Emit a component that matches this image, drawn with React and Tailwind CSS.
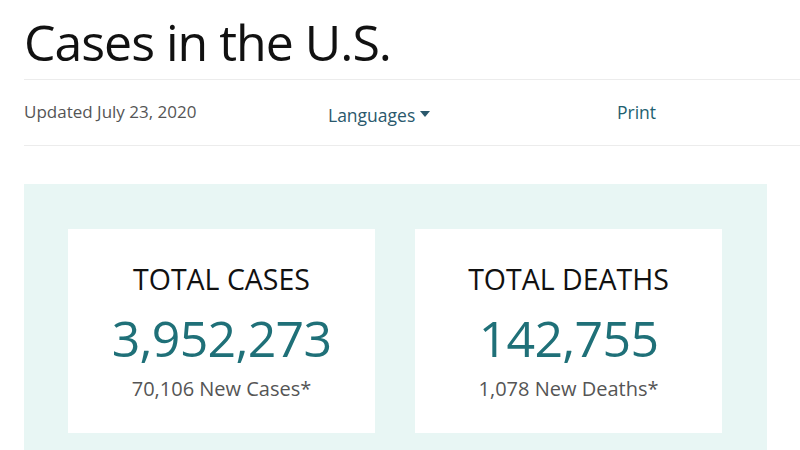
export default function App() {
  const font = { fontFamily: '"Open Sans", "Noto Sans", sans-serif' };
  return (
    <div className="w-[800px] h-[450px] overflow-hidden bg-white" style={font}>
      <div className="ml-6 h-[80px] border-b border-[#ececec]">
        <h1 className="pt-[8px] text-[50px] leading-[68px] text-[#111] tracking-[-1px]">Cases in the U.S.</h1>
      </div>
      <div className="ml-6 h-[66px] border-b border-[#ececec] flex items-start pt-[20px]">
        <div className="w-[304px] text-[17px] leading-[24px] text-[#555]">Updated July 23, 2020</div>
        <div className="w-[289px] flex items-center text-[17.5px] leading-[24px] text-[#2a586c] pt-[3px]">
          Languages
          <svg width="10" height="6" viewBox="0 0 10 6" className="ml-[5px] mt-[-2px]"><path d="M0 0h10L5 6z" fill="#2a586c" /></svg>
        </div>
        <div className="text-[17.5px] leading-[24px] text-[#22606f]">Print</div>
      </div>
      <div className="ml-6 mt-[38px] w-[743px] bg-[#e8f6f4] pt-[45px] px-[44px] pb-[45px] flex gap-[40px]">
        {[
          ['TOTAL CASES', '3,952,273', '70,106 New Cases*'],
          ['TOTAL DEATHS', '142,755', '1,078 New Deaths*'],
        ].map(([t, n, s]) => (
          <div key={t} className="w-[307px] h-[204px] bg-white flex flex-col items-center pt-[32px]">
            <div className="text-[28.5px] leading-[36px] text-[#111]">{t}</div>
            <div className="mt-[13px] text-[50px] leading-[56px] tracking-[-0.7px] text-[#1f7078]">{n}</div>
            <div className="mt-[9px] text-[20px] leading-[28px] text-[#555]">{s}</div>
          </div>
        ))}
      </div>
    </div>
  );
}
